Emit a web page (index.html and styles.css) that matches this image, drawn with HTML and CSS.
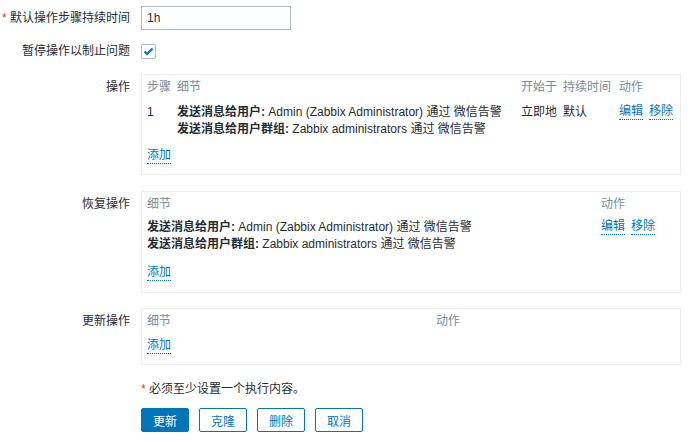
FILE: index.html
```html
<!DOCTYPE html>
<html lang="zh">
<head>
<meta charset="utf-8">
<link rel="stylesheet" href="styles.css">
</head>
<body>
<div class="form">
  <div class="row row-first">
    <div class="label"><span class="req">*</span> 默认操作步骤持续时间</div>
    <div class="field"><input class="text-input" type="text" value="1h"></div>
  </div>
  <div class="row row-check">
    <div class="label">暂停操作以制止问题</div>
    <div class="field">
      <span class="checkbox"><svg width="11" height="9" viewBox="0 0 11 9"><polyline points="1.5,4.5 4.2,7 9.5,1.5" fill="none" stroke="#0275b8" stroke-width="2.2"/></svg></span>
    </div>
  </div>
  <div class="row row-box">
    <div class="label label-box">操作</div>
    <div class="box box-ops">
      <div class="grid grid-ops head">
        <div>步骤</div><div>细节</div><div>开始于</div><div>持续时间</div><div>动作</div>
      </div>
      <div class="grid grid-ops body">
        <div>1</div>
        <div><b>发送消息给用户:</b> Admin (Zabbix Administrator) 通过 微信告警<br><b>发送消息给用户群组:</b> Zabbix administrators 通过 微信告警</div>
        <div>立即地</div>
        <div>默认</div>
        <div class="actions"><a class="link">编辑</a><a class="link">移除</a></div>
      </div>
      <div class="add add-ops"><a class="link">添加</a></div>
    </div>
  </div>
  <div class="row row-box row-rec">
    <div class="label label-box">恢复操作</div>
    <div class="box box-rec">
      <div class="grid grid-rec head">
        <div>细节</div><div>动作</div>
      </div>
      <div class="grid grid-rec body body-rec">
        <div><b>发送消息给用户:</b> Admin (Zabbix Administrator) 通过 微信告警<br><b>发送消息给用户群组:</b> Zabbix administrators 通过 微信告警</div>
        <div class="actions"><a class="link">编辑</a><a class="link">移除</a></div>
      </div>
      <div class="add add-rec"><a class="link">添加</a></div>
    </div>
  </div>
  <div class="row row-box row-upd">
    <div class="label label-box">更新操作</div>
    <div class="box box-upd">
      <div class="grid grid-upd head">
        <div>细节</div><div>动作</div>
      </div>
      <div class="add add-upd"><a class="link">添加</a></div>
    </div>
  </div>
  <div class="row row-note">
    <div class="label"></div>
    <div class="field note"><span class="req">*</span> 必须至少设置一个执行内容。</div>
  </div>
  <div class="row row-buttons">
    <div class="label"></div>
    <div class="field buttons">
      <button class="btn btn-primary">更新</button>
      <button class="btn">克隆</button>
      <button class="btn">删除</button>
      <button class="btn">取消</button>
    </div>
  </div>
</div>
</body>
</html>
```

FILE: styles.css
```css
* { box-sizing: border-box; }
html, body { margin: 0; padding: 0; background: #ffffff; }
body {
  font-family: "Liberation Sans", Arial, "Noto Sans CJK SC", sans-serif;
  font-size: 12px;
  color: #1f2c33;
  width: 694px;
  height: 442px;
  overflow: hidden;
}
.form { display: flex; flex-direction: column; }
.row { display: flex; align-items: flex-start; }
.label {
  width: 131px;
  flex: none;
  text-align: right;
  padding-right: 1px;
  margin-right: 10px;
  line-height: 24px;
  white-space: nowrap;
}
.req { color: #e33734; }
.row-first { margin-top: 6px; }
.text-input {
  width: 150px;
  height: 24px;
  border: 1px solid #acbbc2;
  padding: 0 5px;
  font: inherit;
  color: #1f2c33;
  margin: 0;
  display: block;
  outline: none;
  background: #fff;
}
.row-check { margin-top: 9px; }
.row-check .field { height: 24px; display: flex; align-items: center; }
.checkbox {
  width: 15px;
  height: 15px;
  border: 1px solid #acbbc2;
  border-radius: 2px;
  display: flex;
  align-items: center;
  justify-content: center;
  background: #fff;
}
.row-box { margin-top: 11px; }
.row-rec { margin-top: 16px; }
.row-upd { margin-top: 15px; }
.label-box { line-height: 16px; padding-top: 5px; }
.box {
  width: 540px;
  border: 1px solid #ebeef0;
  padding: 4px 5px 10px 5px;
}
.box-rec { padding-bottom: 11px; }
.grid { display: grid; }
.head { color: #768d99; line-height: 16px; }
.body { line-height: 17px; margin-top: 9px; }
.body-rec { margin-top: 7px; }
.grid-ops { grid-template-columns: 30px 344px 42px 56px 1fr; }
.grid-rec { grid-template-columns: 454px 1fr; }
.grid-upd { grid-template-columns: 289px 1fr; }
.actions { display: flex; gap: 6px; align-items: flex-start; align-self: start; }
.link {
  color: #0275b8;
  text-decoration: none;
  border-bottom: 1px dotted #0275b8;
  line-height: 15px;
  display: inline-block;
  cursor: pointer;
}
.add { line-height: 16px; }
.add-ops { margin-top: 9px; }
.add-rec { margin-top: 11px; }
.add-upd { margin-top: 8px; }
.row-note { margin-top: 17px; }
.note { line-height: 14px; }
.row-note .label { line-height: 14px; }
.row-buttons { margin-top: 12px; }
.buttons { display: flex; gap: 10px; }
.btn {
  width: 48px;
  height: 24px;
  border: 1px solid #0275b8;
  border-radius: 2px;
  background: #ffffff;
  color: #0275b8;
  font: inherit;
  font-size: 12px;
  padding: 0;
  margin: 0;
}
.btn-primary { background: #0275b8; color: #ffffff; }
```
